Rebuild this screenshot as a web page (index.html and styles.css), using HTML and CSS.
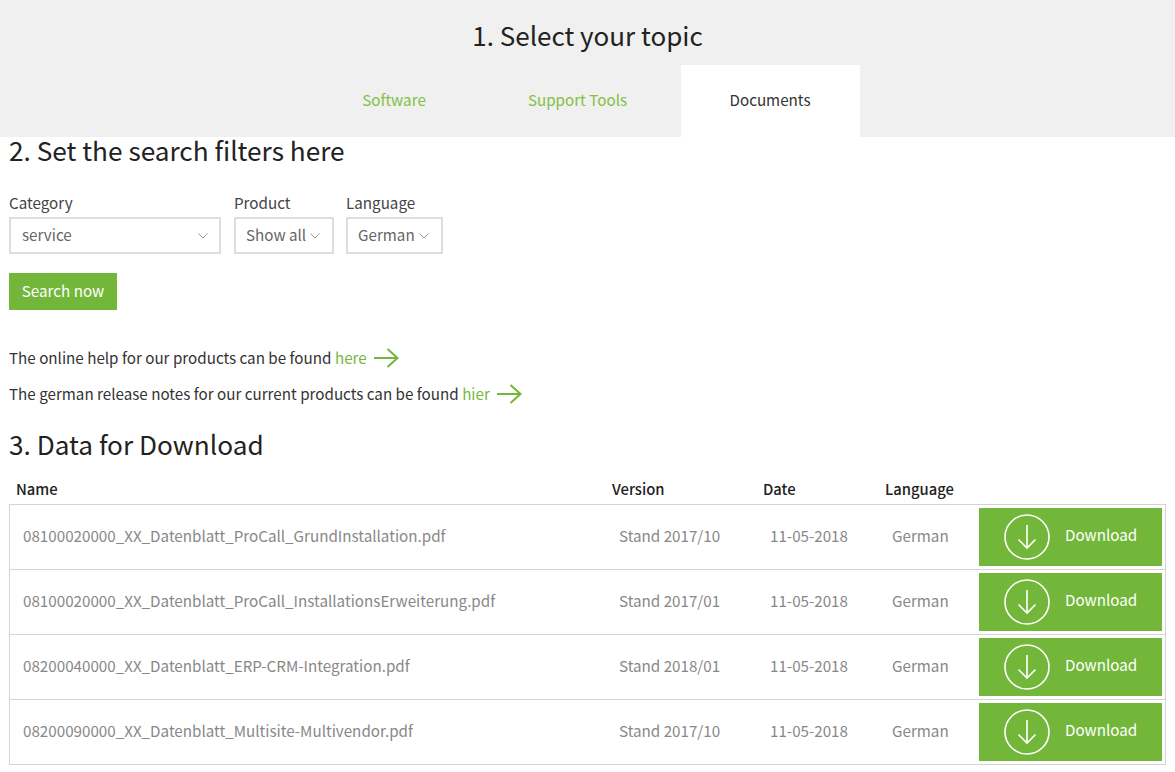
FILE: index.html
```html
<!DOCTYPE html>
<html lang="en">
<head>
<meta charset="utf-8">
<title>Downloads</title>
<link rel="stylesheet" href="styles.css">
</head>
<body>
<header class="topic">
  <h1 class="topic-title">1. Select your topic</h1>
  <nav class="tabs">
    <a class="tab tab-software">Software</a>
    <a class="tab tab-tools">Support Tools</a>
    <a class="tab tab-docs is-active">Documents</a>
  </nav>
</header>
<main class="content">
  <h2 class="heading heading-filters">2. Set the search filters here</h2>
  <form class="filters">
    <div class="field">
      <span class="field-label">Category</span>
      <div class="select select-category"><span>service</span><svg class="chevron" viewBox="0 0 10 6"><path d="M.5.5 5 5 9.500.5"/></svg></div>
    </div>
    <div class="field">
      <span class="field-label">Product</span>
      <div class="select select-product"><span>Show all</span><svg class="chevron" viewBox="0 0 10 6"><path d="M.5.5 5 5 9.500.5"/></svg></div>
    </div>
    <div class="field">
      <span class="field-label">Language</span>
      <div class="select select-language"><span>German</span><svg class="chevron" viewBox="0 0 10 6"><path d="M.5.5 5 5 9.500.5"/></svg></div>
    </div>
  </form>
  <a class="search-btn">Search now</a>
  <p class="note note-first">The online help for our products can be found <a class="link">here</a><svg class="arrow" viewBox="0 0 25 20"><path d="M0 10h23.500M13.500 1l10 9-10 9"/></svg></p>
  <p class="note">The german release notes for our current products can be found <a class="link">hier</a><svg class="arrow" viewBox="0 0 25 20"><path d="M0 10h23.500M13.500 1l10 9-10 9"/></svg></p>
  <h2 class="heading heading-data">3. Data for Download</h2>
  <div class="cols table-head">
    <span>Name</span><span>Version</span><span>Date</span><span>Language</span>
  </div>
  <div class="table-body">
    <div class="cols row">
      <span>08100020000_XX_Datenblatt_ProCall_GrundInstallation.pdf</span><span>Stand 2017/10</span><span>11-05-2018</span><span>German</span>
      <a class="download"><svg class="dl-icon" viewBox="0 0 46 46"><circle cx="23" cy="23" r="22"/><path d="M23 11v23M14.500 25.500 23 34l8.500-8.500"/></svg><span>Download</span></a>
    </div>
    <div class="cols row">
      <span>08100020000_XX_Datenblatt_ProCall_InstallationsErweiterung.pdf</span><span>Stand 2017/01</span><span>11-05-2018</span><span>German</span>
      <a class="download"><svg class="dl-icon" viewBox="0 0 46 46"><circle cx="23" cy="23" r="22"/><path d="M23 11v23M14.500 25.500 23 34l8.500-8.500"/></svg><span>Download</span></a>
    </div>
    <div class="cols row">
      <span>08200040000_XX_Datenblatt_ERP-CRM-Integration.pdf</span><span>Stand 2018/01</span><span>11-05-2018</span><span>German</span>
      <a class="download"><svg class="dl-icon" viewBox="0 0 46 46"><circle cx="23" cy="23" r="22"/><path d="M23 11v23M14.500 25.500 23 34l8.500-8.500"/></svg><span>Download</span></a>
    </div>
    <div class="cols row">
      <span>08200090000_XX_Datenblatt_Multisite-Multivendor.pdf</span><span>Stand 2017/10</span><span>11-05-2018</span><span>German</span>
      <a class="download"><svg class="dl-icon" viewBox="0 0 46 46"><circle cx="23" cy="23" r="22"/><path d="M23 11v23M14.500 25.500 23 34l8.500-8.500"/></svg><span>Download</span></a>
    </div>
  </div>
</main>
</body>
</html>
```

FILE: styles.css
```css
* { box-sizing: border-box; }
html, body { margin: 0; padding: 0; }
body {
  font-family: "Noto Sans CJK SC", "Open Sans", sans-serif;
  font-size: 15.2px;
  line-height: 24px;
  color: #333;
  background: #fff;
  overflow: hidden;
}
.topic {
  background: #f0f0f0;
  height: 137px;
  padding-top: 17px;
}
.topic-title {
  margin: 0;
  height: 48px;
  font-size: 26px;
  line-height: 36px;
  font-weight: 400;
  color: #222;
  text-align: center;
}
.tabs {
  display: flex;
  justify-content: center;
  gap: 5px;
}
.tab {
  height: 72px;
  line-height: 69px;
  text-align: center;
  color: #82c045;
}
.tab-software { width: 161px; }
.tab-tools { width: 196px; }
.tab-docs { width: 179px; margin-right: 2px; }
.tab.is-active { background: #fff; color: #333; }
.content { padding: 0 9px; }
.heading {
  margin: 0;
  font-size: 26.200px;
  font-weight: 400;
  color: #222;
}
.heading-filters { line-height: 27px; height: 28px; }
.heading-data { margin-top: 20px; line-height: 27px; height: 28px; }
.filters {
  display: flex;
  margin-top: 26px;
}
.field-label { display: block; height: 29px; line-height: 28px; color: #444; margin-top: -3px; }
.field { display: block; margin-right: 13px; }
.field:nth-child(2) { margin-right: 12px; }
.select {
  display: flex;
  align-items: center;
  justify-content: space-between;
  height: 37px;
  padding: 0 12px 0 10px;
  border: 2px solid #dedede;
  color: #666;
  line-height: 30px;
}
.select span { margin-top: -3px; }
.select-category { width: 212px; padding: 0 11px; }
.select-product { width: 100px; }
.select-language { width: 97px; }
.chevron { width: 10px; height: 6px; fill: none; stroke: #999; stroke-width: 1; }
.search-btn {
  display: block;
  width: 108px;
  height: 37px;
  margin-top: 19px;
  line-height: 35px;
  text-align: center;
  background: #72b739;
  color: #fff;
}
.note {
  display: flex;
  align-items: center;
  margin: 0;
  height: 36px;
  color: #333;
}
.note-first { margin-top: 29px; }
.link { color: #76b83f; margin-left: 3.500px; }
.arrow {
  width: 25px;
  height: 20px;
  margin: 2px 0 0 7px;
  fill: none;
  stroke: #72b739;
  stroke-width: 2;
}
.cols {
  display: grid;
  grid-template-columns: 596px 151px 122px 96px 186px;
  align-items: center;
}
.table-head {
  height: 33px;
  margin-top: 12px;
  padding-top: 2px;
  font-size: 14.800px;
  font-weight: 500;
  color: #222;
}
.table-head span { padding-left: 7px; }
.table-body {
  width: 1157px;
  border: 1px solid #d4d4d4;
}
.row {
  height: 65px;
  color: #888;
  border-bottom: 1px solid #d4d4d4;
}
.row:last-child { border-bottom: 0; height: 64px; }
.row > span { padding: 0 0 4px 13px; white-space: nowrap; }
.download {
  display: flex;
  align-items: center;
  width: 183px;
  height: 58px;
  margin-left: 4px;
  padding-left: 25px;
  background: #72b739;
  color: #fff;
}
.dl-icon {
  width: 46px;
  height: 46px;
  fill: none;
  stroke: #fff;
  stroke-width: 1.600;
}
.download span { margin-left: 15px; margin-top: -6px; }
```
